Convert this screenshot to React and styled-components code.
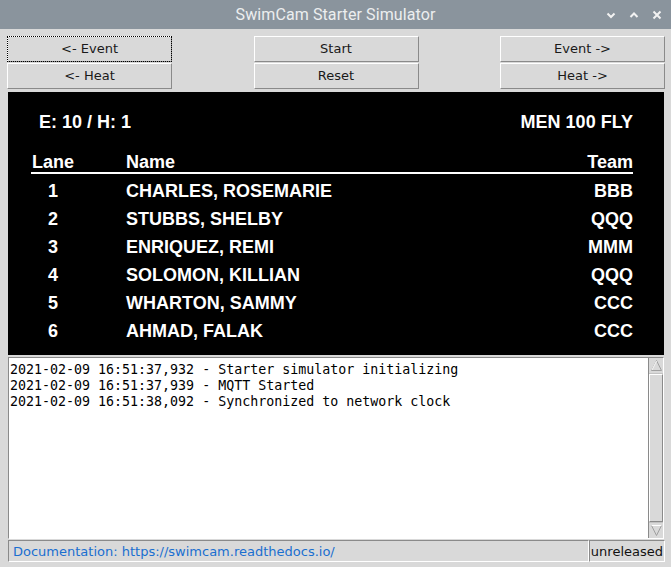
import React from "react";
import styled, { createGlobalStyle } from "styled-components";

const GlobalStyle = createGlobalStyle`
    html, body {
        margin: 0;
        padding: 0;
        background: #d9d9d9;
    }
    * {
        box-sizing: border-box;
    }
`;

const swimmers = [
    { lane: 1, name: "CHARLES, ROSEMARIE", team: "BBB" },
    { lane: 2, name: "STUBBS, SHELBY", team: "QQQ" },
    { lane: 3, name: "ENRIQUEZ, REMI", team: "MMM" },
    { lane: 4, name: "SOLOMON, KILLIAN", team: "QQQ" },
    { lane: 5, name: "WHARTON, SAMMY", team: "CCC" },
    { lane: 6, name: "AHMAD, FALAK", team: "CCC" },
];

const logLines = [
    "2021-02-09 16:51:37,932 - Starter simulator initializing",
    "2021-02-09 16:51:37,939 - MQTT Started",
    "2021-02-09 16:51:38,092 - Synchronized to network clock",
];

const App = () => {
    return (
        <>
            <GlobalStyle />
            <Window>
                <TitleBar>
                    <Title>SwimCam Starter Simulator</Title>
                    <WinControls>
                        <svg width="10" height="8" viewBox="0 0 10 8">
                            <path d="M1.5 2.5 L5 6 L8.5 2.5" stroke="#f2f2f2" strokeWidth="2" fill="none" />
                        </svg>
                        <svg width="10" height="8" viewBox="0 0 10 8">
                            <path d="M1.5 6 L5 2.5 L8.5 6" stroke="#f2f2f2" strokeWidth="2" fill="none" />
                        </svg>
                        <svg width="10" height="10" viewBox="0 0 10 10">
                            <path d="M1.5 1.5 L8.5 8.5 M8.5 1.5 L1.5 8.5" stroke="#f2f2f2" strokeWidth="2" fill="none" />
                        </svg>
                    </WinControls>
                </TitleBar>

                <Body>
                    <Controls>
                        <ButtonCol>
                            <TkButton $focused>&lt;- Event</TkButton>
                            <TkButton>&lt;- Heat</TkButton>
                        </ButtonCol>
                        <ButtonCol>
                            <TkButton>Start</TkButton>
                            <TkButton>Reset</TkButton>
                        </ButtonCol>
                        <ButtonCol>
                            <TkButton>Event -&gt;</TkButton>
                            <TkButton>Heat -&gt;</TkButton>
                        </ButtonCol>
                    </Controls>

                    <Board>
                        <InfoRow>
                            <span>E: 10 / H: 1</span>
                            <span>MEN 100 FLY</span>
                        </InfoRow>
                        <Heat>
                            <HeadCell $center>Lane</HeadCell>
                            <HeadCell>Name</HeadCell>
                            <HeadCell $right>Team</HeadCell>
                            {swimmers.map((s) => (
                                <React.Fragment key={s.lane}>
                                    <Cell $center>{s.lane}</Cell>
                                    <Cell>{s.name}</Cell>
                                    <Cell $right>{s.team}</Cell>
                                </React.Fragment>
                            ))}
                        </Heat>
                    </Board>

                    <LogBox>
                        <LogText>
                            {logLines.map((l) => (
                                <div key={l}>{l}</div>
                            ))}
                        </LogText>
                        <ScrollBar>
                            <ArrowBtn>
                                <svg width="13" height="13" viewBox="0 0 13 13">
                                    <path d="M1.5 11.5 L6.5 1.5 L11.5 11.5 Z" fill="#d9d9d9" stroke="#a0a0a0" />
                                    <path d="M2 11 L6.5 2" stroke="#ffffff" />
                                </svg>
                            </ArrowBtn>
                            <Thumb />
                            <ArrowBtn>
                                <svg width="13" height="13" viewBox="0 0 13 13">
                                    <path d="M1.5 1.5 L6.5 11.5 L11.5 1.5 Z" fill="#d9d9d9" stroke="#a0a0a0" />
                                    <path d="M1.5 1.5 L11.5 1.5" stroke="#ffffff" />
                                </svg>
                            </ArrowBtn>
                        </ScrollBar>
                    </LogBox>

                    <StatusBar>
                        <StatusField $grow $link>
                            Documentation: https://swimcam.readthedocs.io/
                        </StatusField>
                        <StatusField>unreleased</StatusField>
                    </StatusBar>
                </Body>
            </Window>
        </>
    );
};

export default App;

const Window = styled.div`
    width: 671px;
    height: 567px;
    display: flex;
    flex-direction: column;
    background: #d9d9d9;
`;

const TitleBar = styled.div`
    position: relative;
    height: 29px;
    flex: none;
    background: #8a949d;
    display: flex;
    align-items: center;
    justify-content: center;
`;

const Title = styled.div`
    font-family: Roboto, "Liberation Sans", sans-serif;
    font-size: 16px;
    color: #eceeef;
    letter-spacing: 0.1px;
`;

const WinControls = styled.div`
    position: absolute;
    right: 9px;
    top: 10px;
    display: flex;
    gap: 13px;
    align-items: center;
`;

const Body = styled.div`
    flex: 1;
    display: flex;
    flex-direction: column;
    padding: 7px 6px 6px 7px;
`;

const Controls = styled.div`
    display: flex;
    justify-content: space-between;
`;

const ButtonCol = styled.div`
    width: 165px;
    display: flex;
    flex-direction: column;
    gap: 1px;
`;

const TkButton = styled.div`
    height: 26px;
    display: flex;
    align-items: center;
    justify-content: center;
    padding-bottom: 1px;
    font-family: "DejaVu Sans", sans-serif;
    font-size: 13px;
    color: #1a1a1a;
    background: #d9d9d9;
    border: 1px solid;
    border-color: #ffffff #8a8a8a #8a8a8a #ffffff;
    outline: ${(p) => (p.$focused ? "1px dotted #000" : "none")};
    outline-offset: -1px;
`;

const Board = styled.div`
    margin: 3px 1px 0 1px;
    height: 263px;
    background: #000;
    color: #fff;
    font-family: "Liberation Sans", Arial, sans-serif;
    font-weight: bold;
    font-size: 18px;
    padding: 19px 31px 0 23px;
`;

const InfoRow = styled.div`
    display: flex;
    justify-content: space-between;
    line-height: 22px;
    padding-left: 8px;
`;

const Heat = styled.div`
    margin-top: 20px;
    display: grid;
    grid-template-columns: 44px 1fr auto;
    column-gap: 51px;
`;

const HeadCell = styled.div`
    line-height: 19px;
    text-align: ${(p) => (p.$center ? "center" : p.$right ? "right" : "left")};
    border-bottom: 2px solid #fff;
    margin-bottom: 3px;
    margin-right: ${(p) => (p.$right ? "0" : "-51px")};
    padding-right: ${(p) => (p.$right ? "0" : "51px")};
`;

const Cell = styled.div`
    line-height: 28px;
    text-align: ${(p) => (p.$center ? "center" : p.$right ? "right" : "left")};
`;

const LogBox = styled.div`
    margin: 2px 1px 0 1px;
    height: 182px;
    display: flex;
    background: #fff;
    border: 1px solid;
    border-color: #8a8a8a #ffffff #ffffff #8a8a8a;
`;

const LogText = styled.div`
    flex: 1;
    padding: 4px 0 0 1px;
    font-family: "DejaVu Sans Mono", monospace;
    font-size: 13.3px;
    line-height: 16px;
    color: #000;
    white-space: pre;
`;

const ScrollBar = styled.div`
    width: 15px;
    display: flex;
    flex-direction: column;
    background: #c3c3c3;
    border-left: 1px solid #8a8a8a;
`;

const ArrowBtn = styled.div`
    height: 15px;
    display: flex;
    align-items: center;
    justify-content: center;
    background: #d9d9d9;
`;

const Thumb = styled.div`
    flex: 1;
    margin: 1px 0;
    background: #d9d9d9;
    border: 1px solid;
    border-color: #ffffff #8a8a8a #8a8a8a #ffffff;
`;

const StatusBar = styled.div`
    margin: 1px 0 0 1px;
    height: 22px;
    display: flex;
`;

const StatusField = styled.div`
    flex: ${(p) => (p.$grow ? "1" : "none")};
    display: flex;
    align-items: center;
    padding: 0 ${(p) => (p.$grow ? "4px" : "1px")};
    font-family: "DejaVu Sans", sans-serif;
    font-size: 13px;
    color: ${(p) => (p.$link ? "#1a6fd0" : "#111")};
    border: 1px solid;
    border-color: #8a8a8a #ffffff #ffffff #8a8a8a;
`;
